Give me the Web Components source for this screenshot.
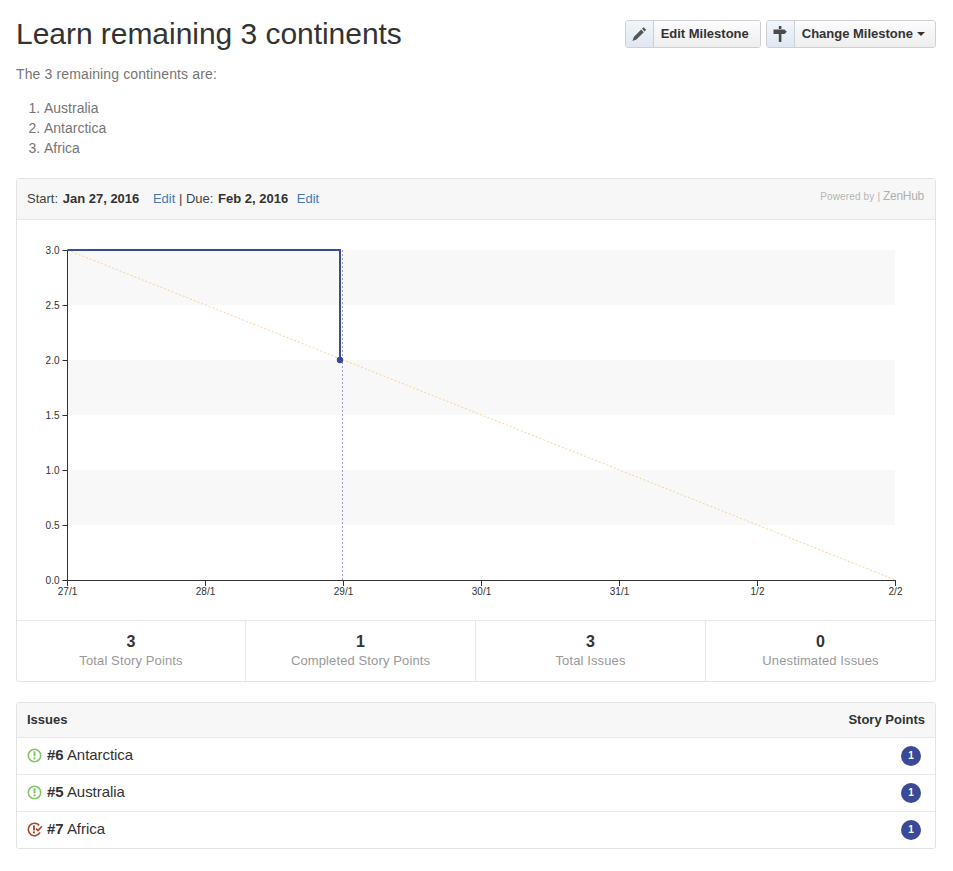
<!DOCTYPE html>
<html>
<head>
<meta charset="utf-8">
<title>Learn remaining 3 continents</title>
<style>
    html, body { margin: 0; background: #fff; }
    body { font: 14px/20px "Liberation Sans", Arial, sans-serif; color: #333; }
</style>
</head>
<body>
<milestone-page>
    <milestone-head slot="head" title="Learn remaining 3 continents">
        <icon-button label="Edit Milestone" icon="pencil"></icon-button>
        <icon-button label="Change Milestone" icon="signpost" caret></icon-button>
    </milestone-head>
    <milestone-desc slot="desc"></milestone-desc>
    <burndown-panel slot="burndown"></burndown-panel>
    <issue-list slot="issues">
        <issue-row number="6" name="Antarctica" state="open"></issue-row>
        <issue-row number="5" name="Australia" state="open"></issue-row>
        <issue-row number="7" name="Africa" state="closed"></issue-row>
    </issue-list>
</milestone-page>

<script>
const ICONS = {
    pencil: '<svg width="16" height="16" viewBox="0 0 16 16"><path fill="#555" d="M12.6 1.2l2.6 2.6-1.6 1.6-2.6-2.6zM10.2 3.6l2.6 2.6-7.4 7.4-3.9 1.3 1.3-3.9z"/></svg>',
    signpost: '<svg width="14" height="18" viewBox="0 0 14 18"><g fill="#4a4a4a"><rect x="5.8" y="1" width="2.6" height="3"/><path d="M0.5 4.5h11L13.8 6.7 11.5 9H0.5z"/><rect x="5.8" y="9" width="2.6" height="8"/></g></svg>',
    open: '<svg width="15" height="15" viewBox="0 0 15 15"><circle cx="7.5" cy="7.5" r="6.2" fill="none" stroke="#82c564" stroke-width="1.6"/><rect x="6.5" y="3.4" width="2" height="5" fill="#82c564"/><rect x="6.5" y="9.4" width="2" height="2" fill="#82c564"/></svg>',
    closed: '<svg width="16" height="15" viewBox="0 0 16 15"><path d="M12.2 3.4A6.2 6.2 0 1 0 13 10.4" fill="none" stroke="#a9492c" stroke-width="1.6"/><rect x="6" y="3.4" width="1.9" height="5" fill="#a9492c"/><rect x="6" y="9.4" width="1.9" height="2" fill="#a9492c"/><path d="M9 6.6l2 2 4-4.4" fill="none" stroke="#a9492c" stroke-width="1.7"/></svg>'
}

function shadow(el, html) {
    el.attachShadow({ mode: 'open' }).innerHTML = html
}

class MilestonePage extends HTMLElement {
    constructor() {
        super()
        shadow(this, `
        <style>
            :host { display: block; padding: 16px 17px 22px 16px; }
            ::slotted([slot="burndown"]) { margin-bottom: 20px; }
        </style>
        <slot name="head"></slot>
        <slot name="desc"></slot>
        <slot name="burndown"></slot>
        <slot name="issues"></slot>`)
    }
}

class MilestoneHead extends HTMLElement {
    constructor() {
        super()
        shadow(this, `
        <style>
            :host { display: flex; justify-content: space-between; align-items: flex-start; height: 36px; margin-bottom: 12px; }
            h1 { margin: 1px 0 0; font-size: 30px; line-height: 34px; font-weight: 400; color: #333; letter-spacing: -.04px; }
            .actions { display: flex; gap: 5px; margin-top: 4px; }
        </style>
        <h1>${this.getAttribute('title')}</h1>
        <div class="actions"><slot></slot></div>`)
    }
}

class IconButton extends HTMLElement {
    constructor() {
        super()
        const caret = this.hasAttribute('caret') ? '<i></i>' : ''
        shadow(this, `
        <style>
            :host { display: flex; height: 28px; box-sizing: border-box; border: 1px solid #ccd0d6; border-radius: 3px; font-weight: 700; font-size: 13px; color: #333; overflow: hidden; }
            .icon { width: 27px; display: flex; align-items: center; justify-content: center; background: linear-gradient(#f2f6fb, #dfe7f1); border-right: 1px solid #ccd0d6; }
            .label { display: flex; align-items: center; padding: 0 10px 0 7px; background: linear-gradient(#fcfcfc, #eeeeee); line-height: 26px; }
            :host(:not([caret])) .label { padding-right: 11px; }
            i { display: inline-block; margin-left: 4px; border: 4px solid transparent; border-top-color: #333; border-bottom: 0; }
        </style>
        <span class="icon">${ICONS[this.getAttribute('icon')]}</span>
        <span class="label">${this.getAttribute('label')}${caret}</span>`)
    }
}

class MilestoneDesc extends HTMLElement {
    constructor() {
        super()
        shadow(this, `
        <style>
            :host { display: block; color: #767676; font-size: 14px; line-height: 20px; margin-bottom: 20px; }
            p { margin: 0 0 14px; letter-spacing: .13px; }
            ol { margin: 0; padding: 0 0 0 28px; }
        </style>
        <p>The 3 remaining continents are:</p>
        <ol><li>Australia</li><li>Antarctica</li><li>Africa</li></ol>`)
    }
}

class BurndownPanel extends HTMLElement {
    constructor() {
        super()
        shadow(this, `
        <style>
            :host { display: block; border: 1px solid #e3e3e3; border-radius: 3px; font-size: 13px; }
            header { display: flex; justify-content: space-between; height: 41px; box-sizing: border-box; padding: 10px 11px 0 10px; background: #f7f7f7; border-bottom: 1px solid #e8e8e8; line-height: 20px; color: #444; }
            b { color: #333; margin-left: 1px; }
            a { color: #4a76b8; text-decoration: none; }
            .gap { margin-left: 10px; }
            .powered { font-size: 10px; color: #b5b5b5; line-height: 16px; letter-spacing: .15px; margin-top: -1px; }
            .powered span { font-size: 12px; font-weight: 400; letter-spacing: -.3px; color: #b0b0b0; }
            .stats { display: grid; grid-template-columns: 229px 230px 230px 1fr; border-top: 1px solid #e8e8e8; }
            svg { display: block; }
            svg text { font: 10px "Liberation Sans", Arial, sans-serif; fill: #333; }
        </style>
        <header>
            <div>Start: <b>Jan 27, 2016</b> <a class="gap" href="#">Edit</a> | Due: <b>Feb 2, 2016</b> <a class="gap" href="#" style="margin-left:5px">Edit</a></div>
            <div class="powered">Powered by | <span>ZenHub</span></div>
        </header>
        ${this.chart()}
        <div class="stats">
            <stat-cell value="3" label="Total Story Points"></stat-cell>
            <stat-cell value="1" label="Completed Story Points"></stat-cell>
            <stat-cell value="3" label="Total Issues"></stat-cell>
            <stat-cell value="0" label="Unestimated Issues" last></stat-cell>
        </div>`)
    }

    // coordinates are relative to the panel's inner box (page x - 17, page y - 220)
    chart() {
        const x0 = 50.5, x1 = 878.5, top = 30, bottom = 360
        const y = v => bottom - v * 110
        let bands = '', yTicks = '', xTicks = ''
        for (const v of [3, 2, 1])
            bands += `<rect x="50" y="${y(v)}" width="828" height="55" fill="#f8f8f8"/>`
        for (let v = 0; v <= 3; v += 0.5) {
            const py = y(v)
            yTicks += `<path d="M${x0 - 5} ${py + .5}H${x0}" stroke="#333"/><text x="${x0 - 8}" y="${py + 3.5}" text-anchor="end">${v.toFixed(1)}</text>`
        }
        const labels = ['27/1', '28/1', '29/1', '30/1', '31/1', '1/2', '2/2']
        labels.forEach((t, i) => {
            const px = x0 + i * 138
            xTicks += `<path d="M${px} ${bottom}v6" stroke="#333"/><text x="${px}" y="${bottom + 15}" text-anchor="middle">${t}</text>`
        })
        return `<svg width="918" height="400" viewBox="0 0 918 400">
            ${bands}
            <path d="M${x0} ${top}L${x1} ${bottom}" stroke="#f7d29c" stroke-dasharray="2 2" fill="none"/>
            <path d="M325.5 ${top}V${bottom}" stroke="#9a9fd8" stroke-dasharray="2 2" fill="none"/>
            <path d="M${x0} ${top}V${bottom + .5}H${x1}" stroke="#333" fill="none"/>
            ${yTicks}${xTicks}
            <path d="M${x0} ${top}H323V${y(2)}" stroke="#3b4a96" stroke-width="2" fill="none"/>
            <circle cx="323" cy="${y(2)}" r="3.2" fill="#3b4a96"/>
        </svg>`
    }
}

class StatCell extends HTMLElement {
    constructor() {
        super()
        shadow(this, `
        <style>
            :host { display: block; height: 60px; box-sizing: border-box; padding-top: 11px; text-align: center; border-right: 1px solid #e8e8e8; }
            :host([last]) { border-right: 0; }
            b { display: block; font-size: 16px; line-height: 20px; color: #333; }
            span { display: block; font-size: 13px; line-height: 20px; margin-top: -1px; color: #999; letter-spacing: .12px; }
        </style>
        <b>${this.getAttribute('value')}</b><span>${this.getAttribute('label')}</span>`)
    }
}

class IssueList extends HTMLElement {
    constructor() {
        super()
        shadow(this, `
        <style>
            :host { display: block; border: 1px solid #e3e3e3; border-radius: 3px; }
            header { display: flex; justify-content: space-between; height: 35px; box-sizing: border-box; padding: 7px 10px 0; background: #f7f7f7; border-bottom: 1px solid #e8e8e8; font-size: 13px; font-weight: 700; line-height: 20px; color: #333; }
        </style>
        <header><span>Issues</span><span>Story Points</span></header>
        <slot></slot>`)
    }
}

class IssueRow extends HTMLElement {
    constructor() {
        super()
        shadow(this, `
        <style>
            :host { display: flex; align-items: center; height: 37px; box-sizing: border-box; padding: 0 14px 0 10px; border-bottom: 1px solid #e8e8e8; font-size: 15px; color: #333; }
            :host(:last-child) { border-bottom: 0; height: 36px; }
            .icon { display: flex; width: 20px; margin-bottom: 1px; }
            .name { flex: 1; margin-bottom: 2px; letter-spacing: -.05px; }
            .badge { width: 20px; height: 20px; border-radius: 50%; background: #3b4a96; color: #fff; font-size: 10px; font-weight: 700; line-height: 20px; text-align: center; }
        </style>
        <span class="icon">${ICONS[this.getAttribute('state')]}</span>
        <span class="name"><b>#${this.getAttribute('number')}</b> ${this.getAttribute('name')}</span>
        <span class="badge">1</span>`)
    }
}

customElements.define('milestone-page', MilestonePage)
customElements.define('milestone-head', MilestoneHead)
customElements.define('icon-button', IconButton)
customElements.define('milestone-desc', MilestoneDesc)
customElements.define('burndown-panel', BurndownPanel)
customElements.define('stat-cell', StatCell)
customElements.define('issue-list', IssueList)
customElements.define('issue-row', IssueRow)
</script>
</body>
</html>
